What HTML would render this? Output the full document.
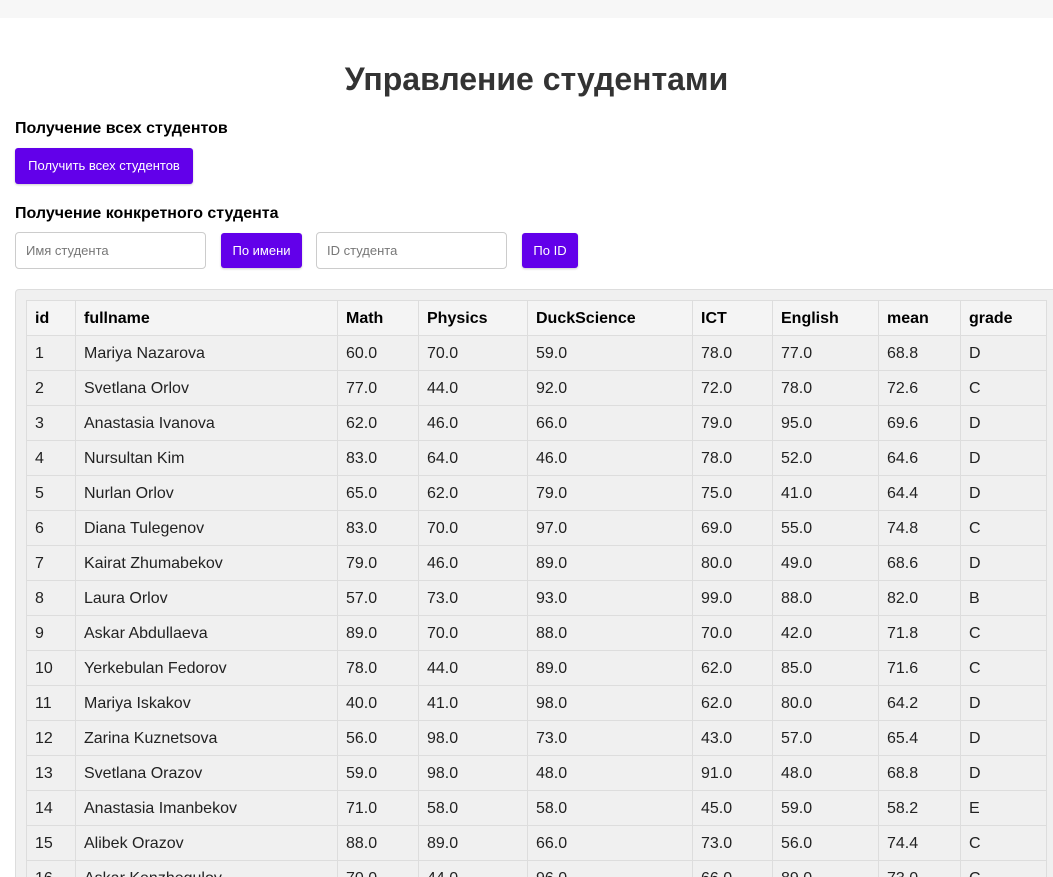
<!DOCTYPE html>
<html style="overflow:hidden;height:877px"><head><meta charset="utf-8"><style>
*{box-sizing:border-box}
body{margin:0;width:1053px;height:877px;overflow:hidden;background:#fff;font-family:"Liberation Sans",Arial,sans-serif;color:#000;position:relative}
.top{position:absolute;left:0;top:0;width:1053px;height:18px;background:#f7f7f7}
h1{position:absolute;left:0;width:1073px;top:59px;margin:0;text-align:center;font-size:32px;font-weight:bold;color:#333;line-height:40px}
h3{position:absolute;left:15px;margin:0;font-size:16px;font-weight:bold;line-height:20px}
.btn{position:absolute;background:#6200ea;color:#fff;border-radius:3px;font-size:13px;line-height:36px;text-align:center;box-shadow:0 1px 2px rgba(0,0,0,.2)}
.inp{position:absolute;border:1px solid #ccc;border-radius:4px;height:37px;font-size:13px;color:#777;line-height:35px;padding-left:10px}
.clip{position:absolute;left:0;top:0;width:1053px;height:877px;overflow:hidden}
.box{position:absolute;left:15px;top:289px;width:1050px;height:600px;background:#f0f0f0;border:1px solid #ddd;border-radius:4px}
table{position:absolute;left:26px;top:300px;border-collapse:collapse;table-layout:fixed;width:1020px;font-size:16px}
td,th{border:1px solid #ddd;height:35px;padding:1px 8px 0;text-align:left;white-space:nowrap;overflow:hidden}
th{background:#f4f4f4;font-weight:bold}
td{color:#222}
</style></head><body>
<div class="top"></div>
<h1>Управление студентами</h1>
<h3 style="top:119px">Получение всех студентов</h3>
<div class="btn" style="left:15px;top:148px;width:178px;height:36px">Получить всех студентов</div>
<h3 style="top:204px">Получение конкретного студента</h3>
<div class="inp" style="left:15px;top:232px;width:191px">Имя студента</div>
<div class="btn" style="left:221px;top:233px;width:81px;height:35px;line-height:35px">По имени</div>
<div class="inp" style="left:316px;top:232px;width:191px">ID студента</div>
<div class="btn" style="left:522px;top:233px;width:56px;height:35px;line-height:35px">По ID</div>
<div class="clip">
<div class="box"></div>
<table>
<colgroup><col style="width:49px"><col style="width:262px"><col style="width:81px"><col style="width:109px"><col style="width:165px"><col style="width:80px"><col style="width:106px"><col style="width:82px"><col style="width:86px"></colgroup>
<tr><th>id</th><th>fullname</th><th>Math</th><th>Physics</th><th>DuckScience</th><th>ICT</th><th>English</th><th>mean</th><th>grade</th></tr>
<tr><td>1</td><td>Mariya Nazarova</td><td>60.0</td><td>70.0</td><td>59.0</td><td>78.0</td><td>77.0</td><td>68.8</td><td>D</td></tr>
<tr><td>2</td><td>Svetlana Orlov</td><td>77.0</td><td>44.0</td><td>92.0</td><td>72.0</td><td>78.0</td><td>72.6</td><td>C</td></tr>
<tr><td>3</td><td>Anastasia Ivanova</td><td>62.0</td><td>46.0</td><td>66.0</td><td>79.0</td><td>95.0</td><td>69.6</td><td>D</td></tr>
<tr><td>4</td><td>Nursultan Kim</td><td>83.0</td><td>64.0</td><td>46.0</td><td>78.0</td><td>52.0</td><td>64.6</td><td>D</td></tr>
<tr><td>5</td><td>Nurlan Orlov</td><td>65.0</td><td>62.0</td><td>79.0</td><td>75.0</td><td>41.0</td><td>64.4</td><td>D</td></tr>
<tr><td>6</td><td>Diana Tulegenov</td><td>83.0</td><td>70.0</td><td>97.0</td><td>69.0</td><td>55.0</td><td>74.8</td><td>C</td></tr>
<tr><td>7</td><td>Kairat Zhumabekov</td><td>79.0</td><td>46.0</td><td>89.0</td><td>80.0</td><td>49.0</td><td>68.6</td><td>D</td></tr>
<tr><td>8</td><td>Laura Orlov</td><td>57.0</td><td>73.0</td><td>93.0</td><td>99.0</td><td>88.0</td><td>82.0</td><td>B</td></tr>
<tr><td>9</td><td>Askar Abdullaeva</td><td>89.0</td><td>70.0</td><td>88.0</td><td>70.0</td><td>42.0</td><td>71.8</td><td>C</td></tr>
<tr><td>10</td><td>Yerkebulan Fedorov</td><td>78.0</td><td>44.0</td><td>89.0</td><td>62.0</td><td>85.0</td><td>71.6</td><td>C</td></tr>
<tr><td>11</td><td>Mariya Iskakov</td><td>40.0</td><td>41.0</td><td>98.0</td><td>62.0</td><td>80.0</td><td>64.2</td><td>D</td></tr>
<tr><td>12</td><td>Zarina Kuznetsova</td><td>56.0</td><td>98.0</td><td>73.0</td><td>43.0</td><td>57.0</td><td>65.4</td><td>D</td></tr>
<tr><td>13</td><td>Svetlana Orazov</td><td>59.0</td><td>98.0</td><td>48.0</td><td>91.0</td><td>48.0</td><td>68.8</td><td>D</td></tr>
<tr><td>14</td><td>Anastasia Imanbekov</td><td>71.0</td><td>58.0</td><td>58.0</td><td>45.0</td><td>59.0</td><td>58.2</td><td>E</td></tr>
<tr><td>15</td><td>Alibek Orazov</td><td>88.0</td><td>89.0</td><td>66.0</td><td>73.0</td><td>56.0</td><td>74.4</td><td>C</td></tr>
<tr><td>16</td><td>Askar Kenzhegulov</td><td>70.0</td><td>44.0</td><td>96.0</td><td>66.0</td><td>89.0</td><td>73.0</td><td>C</td></tr>
</table>
</div>
</body></html>
